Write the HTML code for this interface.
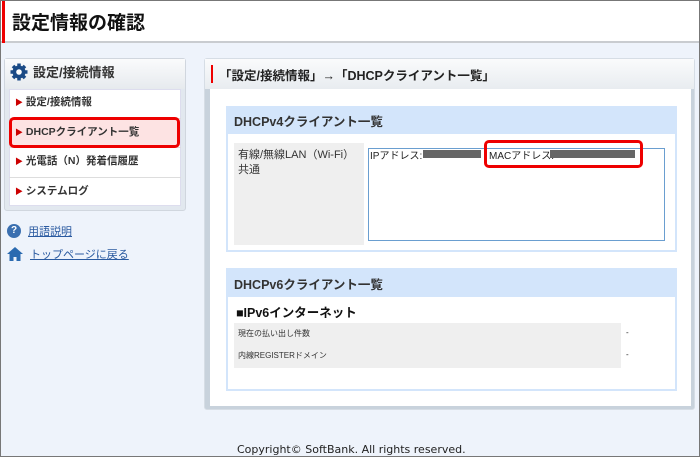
<!DOCTYPE html>
<html><head><meta charset="utf-8"><style>
*{margin:0;padding:0;box-sizing:border-box}
body{width:700px;height:457px;overflow:hidden;font-family:"Liberation Sans","Noto Sans CJK JP",sans-serif;color:#222;background:#eef3fb;position:relative;border:1px solid #777}
.a{position:absolute}
</style></head><body>
<div class="a" style="left:0;top:0;width:698px;height:42px;background:#fff;border-bottom:2px solid #c9ccd0"></div>
<div class="a" style="left:1px;top:0;width:3px;height:42px;background:#e00"></div>
<div class="a" style="left:11px;top:7px;font-size:19px;font-weight:bold;color:#111">設定情報の確認</div>

<div class="a" style="left:3px;top:57px;width:182px;height:153px;background:#e2e8ef;border:1px solid #d0d6de;border-radius:3px"></div>
<div class="a" style="left:4px;top:58px;width:180px;height:30px;background:linear-gradient(#fafbfc,#e6eaee)"></div>
<svg class="a" style="left:8px;top:61px" width="20" height="20" viewBox="0 0 20 20"><g fill="#1a4a86"><circle cx="10" cy="10" r="6.5"/><g stroke="#1a4a86" stroke-width="3.5"><line x1="10" y1="1.5" x2="10" y2="18.5"/><line x1="1.5" y1="10" x2="18.5" y2="10"/><line x1="4" y1="4" x2="16" y2="16"/><line x1="16" y1="4" x2="4" y2="16"/></g></g><circle cx="10" cy="10" r="2.8" fill="#fff"/></svg>
<div class="a" style="left:32px;top:61px;font-size:13px;color:#333;font-weight:bold">設定/接続情報</div>
<div class="a" style="left:8px;top:88px;width:172px;height:117px;background:#fff;border:1px solid #dde"></div>
<div class="a" style="left:8px;top:117px;width:172px;height:1px;background:#ddd"></div>
<div class="a" style="left:8px;top:146px;width:172px;height:1px;background:#ddd"></div>
<div class="a" style="left:8px;top:176px;width:172px;height:1px;background:#ddd"></div>
<div class="a" style="left:8px;top:116px;width:171px;height:31px;background:#fde3e3;border:3px solid #e00;border-radius:5px"></div>
<div class="a" style="left:14px;top:95px;font-size:10.5px;line-height:12px;font-weight:bold;color:#333">
<div style="height:29.5px"><span style="color:#c00;font-size:8px">▶</span> 設定/接続情報</div>
<div style="height:29.5px"><span style="color:#c00;font-size:8px">▶</span> DHCPクライアント一覧</div>
<div style="height:29.5px"><span style="color:#c00;font-size:8px">▶</span> 光電話（N）発着信履歴</div>
<div style="height:29.5px"><span style="color:#c00;font-size:8px">▶</span> システムログ</div>
</div>
<div class="a" style="left:6px;top:223px;width:14px;height:14px;border-radius:50%;background:#3a6fb0;color:#fff;font-size:10px;font-weight:bold;text-align:center;line-height:14px">?</div>
<div class="a" style="left:27px;top:222px;font-size:11px;color:#2a5aa0;text-decoration:underline">用語説明</div>
<svg class="a" style="left:5px;top:245px" width="18" height="16" viewBox="0 0 18 16"><path d="M9 1L1 8h2.5v7h4v-4h3v4h4V8H17z" fill="#2a6ab0"/></svg>
<div class="a" style="left:29px;top:245px;font-size:11px;color:#2a5aa0;text-decoration:underline">トップページに戻る</div>

<div class="a" style="left:203px;top:57px;width:491px;height:352px;background:#c8d2dc;border:1px solid #d6dde5;border-radius:3px"></div>
<div class="a" style="left:204px;top:58px;width:489px;height:30px;background:linear-gradient(#fafbfc,#e8ecf0)"></div>
<div class="a" style="left:210px;top:64px;width:2px;height:18px;background:#e00"></div>
<div class="a" style="left:218px;top:64px;font-size:12.5px;color:#222;font-weight:bold">「設定/接続情報」→「DHCPクライアント一覧」</div>
<div class="a" style="left:209px;top:88px;width:481px;height:317px;background:#fff"></div>

<div class="a" style="left:225px;top:105px;width:451px;height:146px;border:2px solid #d3e5fb"></div>
<div class="a" style="left:225px;top:105px;width:451px;height:28px;background:#d3e5fb"></div>
<div class="a" style="left:233px;top:110px;font-size:12.5px;font-weight:bold;color:#333">DHCPv4クライアント一覧</div>
<div class="a" style="left:233px;top:142px;width:130px;height:102px;background:#efefef"></div>
<div class="a" style="left:237px;top:147px;font-size:11px;line-height:15px;color:#333">有線/無線LAN（Wi-Fi）<br>共通</div>
<div class="a" style="left:367px;top:147px;width:297px;height:93px;border:1px solid #6a9ed0;background:#fff"></div>
<div class="a" style="left:369px;top:146px;font-size:10px;color:#222">IPアドレス:</div>
<div class="a" style="left:422px;top:149px;width:58px;height:8px;background:#666"></div>
<div class="a" style="left:488px;top:146px;font-size:10px;color:#222">MACアドレス:</div>
<div class="a" style="left:549px;top:149px;width:85px;height:8px;background:#666"></div>
<div class="a" style="left:483px;top:139px;width:159px;height:28px;border:3px solid #e00;border-radius:5px"></div>

<div class="a" style="left:225px;top:267px;width:451px;height:123px;border:2px solid #d3e5fb"></div>
<div class="a" style="left:225px;top:267px;width:451px;height:29px;background:#d3e5fb"></div>
<div class="a" style="left:233px;top:273px;font-size:12.5px;font-weight:bold;color:#333">DHCPv6クライアント一覧</div>
<div class="a" style="left:235px;top:301px;font-size:12.5px;font-weight:bold;color:#111">■IPv6インターネット</div>
<div class="a" style="left:233px;top:322px;width:387px;height:45px;background:#efefef"></div>
<div class="a" style="left:237px;top:327px;font-size:8px;color:#333">現在の払い出し件数</div>
<div class="a" style="left:237px;top:349px;font-size:8px;color:#333">内線REGISTERドメイン</div>
<div class="a" style="left:625px;top:327px;font-size:8px">-</div>
<div class="a" style="left:625px;top:349px;font-size:8px">-</div>

<div class="a" style="left:236px;top:442px;font-size:11px;color:#222;font-family:'DejaVu Sans',sans-serif">Copyright© SoftBank. All rights reserved.</div>
</body></html>
